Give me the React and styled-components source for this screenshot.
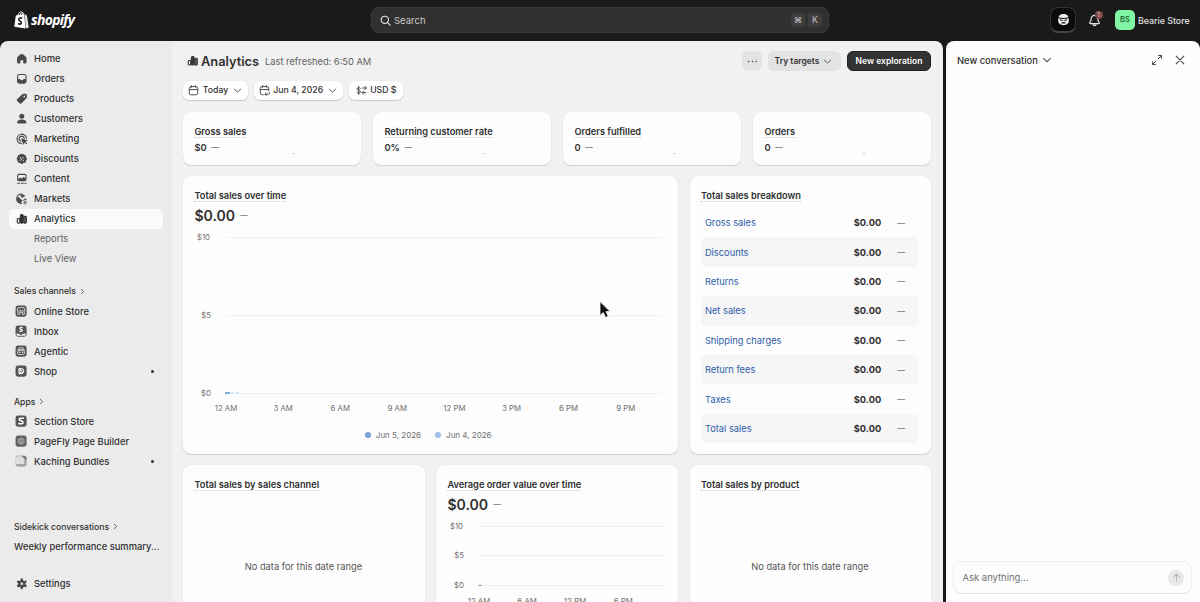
import React from 'react';
import styled, { createGlobalStyle } from 'styled-components';

const NAV = [
  { label: 'Home', icon: 'home' },
  { label: 'Orders', icon: 'orders' },
  { label: 'Products', icon: 'products' },
  { label: 'Customers', icon: 'customers' },
  { label: 'Marketing', icon: 'marketing' },
  { label: 'Discounts', icon: 'discounts' },
  { label: 'Content', icon: 'content' },
  { label: 'Markets', icon: 'markets' },
  { label: 'Analytics', icon: 'analytics', active: true },
  { label: 'Reports', sub: true },
  { label: 'Live View', sub: true },
];

const CHANNELS = [
  { label: 'Online Store', icon: 'store' },
  { label: 'Inbox', icon: 'inbox' },
  { label: 'Agentic', icon: 'agentic' },
  { label: 'Shop', icon: 'shop', dot: true },
];

const APPS = [
  { label: 'Section Store', icon: 'section' },
  { label: 'PageFly Page Builder', icon: 'pagefly' },
  { label: 'Kaching Bundles', icon: 'kaching', dot: true },
];

const METRICS = [
  { label: 'Gross sales', value: '$0' },
  { label: 'Returning customer rate', value: '0%' },
  { label: 'Orders fulfilled', value: '0' },
  { label: 'Orders', value: '0' },
];

const BREAKDOWN = [
  'Gross sales',
  'Discounts',
  'Returns',
  'Net sales',
  'Shipping charges',
  'Return fees',
  'Taxes',
  'Total sales',
];

const fill = '#4a4a4a';
const tile = <rect x="2.2" y="2.2" width="15.6" height="15.6" rx="3.4" fill="#555" />;

const ICONS = {
  home: (
    <path
      fill={fill}
      d="M8.3 3.2a2.6 2.6 0 0 1 3.4 0l4 3.6c.8.7 1.3 1.8 1.3 2.9v5.1c0 1.2-.9 2.2-2.1 2.2h-1.6c-.7 0-1.2-.5-1.2-1.2v-2.3c0-.8-.6-1.4-1.4-1.4h-1.4c-.8 0-1.4.6-1.4 1.4v2.3c0 .7-.5 1.2-1.2 1.2H5.1c-1.2 0-2.1-1-2.1-2.2V9.7c0-1.1.5-2.2 1.3-2.9z"
    />
  ),
  orders: (
    <>
      <rect x="3" y="2.8" width="14" height="14.4" rx="3.6" fill={fill} />
      <path fill="#ebebeb" d="M4.6 6.2c0-1.1.8-1.9 1.9-1.9h7c1.1 0 1.9.8 1.9 1.9v4h-2.2c-.6 0-1 .3-1.3.8-.4.7-.8 1-1.4 1h-1c-.6 0-1-.3-1.4-1-.3-.5-.7-.8-1.3-.8H4.6z" />
    </>
  ),
  products: (
    <path
      fill={fill}
      fillRule="evenodd"
      d="M10.7 3.4c.6-.6 1.3-.9 2.1-.9h2.4c1.3 0 2.3 1 2.3 2.3v2.6c0 .8-.3 1.5-.9 2.1l-6.9 7.1c-.9.9-2.3.9-3.2 0l-3.1-3.2c-.9-.9-.9-2.3 0-3.2zM13.6 7.8a1.3 1.3 0 1 0 0-2.6 1.3 1.3 0 0 0 0 2.6z"
    />
  ),
  customers: (
    <>
      <circle cx="10" cy="6.3" r="3.7" fill={fill} />
      <path fill={fill} d="M3.2 15.2c0-2.4 3-4.2 6.800-4.2s6.800 1.800 6.800 4.200c0 1-.7 1.800-1.700 1.800H4.900c-1 0-1.700-.8-1.700-1.800z" />
    </>
  ),
  marketing: (
    <g fill="none" stroke={fill} strokeWidth="1.7" strokeLinecap="round">
      <path d="M16.8 9.200A6.900 6.900 0 1 0 9.300 17" />
      <path d="M13.6 9A3.800 3.800 0 1 0 9 13.600" />
      <path d="M10.2 10.200l6.800 2.500-2.900 1.400-1.400 2.900z" fill={fill} />
      <path d="M14.5 14.500l2.500 2.500" />
    </g>
  ),
  discounts: (
    <>
      <g fill={fill}>
        <rect x="4" y="4" width="12" height="12" rx="2.5" />
        <rect x="4" y="4" width="12" height="12" rx="2.5" transform="rotate(45 10 10)" />
        <circle cx="10" cy="10" r="6.800" />
      </g>
      <path d="M7.800 12.400l4.400-4.400" stroke="#ebebeb" strokeWidth="1.3" strokeLinecap="round" />
      <circle cx="7.900" cy="8.300" r=".9" fill="#ebebeb" />
      <circle cx="12.200" cy="12.200" r=".9" fill="#ebebeb" />
    </>
  ),
  content: (
    <>
      <rect x="3" y="2.7" width="14" height="10.8" rx="2.8" fill={fill} />
      <path fill="#ebebeb" d="M4.6 5.8c0-.9.6-1.5 1.5-1.5h7.8c.9 0 1.5.6 1.5 1.5v3.4l-2-1.4c-.5-.3-1-.3-1.5 0l-2.3 1.8-1.3-.8c-.4-.3-.9-.2-1.3.1L4.6 10.4z" />
      <path d="M4 16.500h2.600M9.200 16.500h3M14.600 16.500h1.600" stroke={fill} strokeWidth="1.7" strokeLinecap="round" />
    </>
  ),
  markets: (
    <>
      <path d="M10.300 3.200a6.900 6.900 0 1 0-.5 13.700" fill="none" stroke={fill} strokeWidth="1.6" strokeLinecap="round" />
      <path fill={fill} d="M4 7l3 1.400 1.400 2.400 2.400.8-.4 2.300-1.400 1-.4 2.200C5 16.500 3 13.500 3 10.600zM9 3.300c2.500-.5 5.500 1 6.600 3.200l-2.300-.3-1.500 2.100-1.800-.3-1.800-2z" />
      <path d="M16.300 11h-2.300a1.300 1.300 0 0 0 0 2.600h1.300a1.300 1.300 0 0 1 0 2.600h-2.500M14.700 9.900v1M14.700 16.400v1.200" fill="none" stroke={fill} strokeWidth="1.4" strokeLinecap="round" />
    </>
  ),
  analytics: (
    <g fill="none" stroke="#303030" strokeWidth="1.6">
      <rect x="3.3" y="9.6" width="3.7" height="6.8" rx="1.4" />
      <rect x="8" y="3.8" width="4" height="12.6" rx="1.6" fill="#3a3a3a" />
      <rect x="13" y="6.2" width="3.7" height="10.2" rx="1.4" fill="#666" />
    </g>
  ),
  store: (
    <>
      {tile}
      <g fill="none" stroke="#ddd" strokeWidth="1.2">
        <path d="M5.700 5.200h8.600l1.200 3.300a1.700 1.700 0 0 1-3.600 0 1.900 1.900 0 0 1-3.800 0 1.700 1.700 0 0 1-3.600 0z" />
        <path d="M5.500 10.500v4.200h2.400V12h4.200v2.700h2.400v-4.200" />
      </g>
    </>
  ),
  inbox: (
    <>
      {tile}
      <path d="M3.700 13.500c1.700-.5 3.200-.3 4.200.8 1.300 1.300 3 1.300 4.200 0 1-1.100 2.500-1.300 4.200-.8v2.300c0 .5-.4.900-.9.900H4.700c-.6 0-1-.4-1-.9z" fill="#f2f2f2" />
      <path d="M11.700 5.300c-1.300-.8-3.300-.5-3.300.9 0 1.700 3.300 1.200 3.300 3 0 1.400-2 1.700-3.600.8" fill="none" stroke="#f2f2f2" strokeWidth="1.8" strokeLinecap="round" />
    </>
  ),
  agentic: (
    <>
      {tile}
      <g fill="none" stroke="#d8d8d8" strokeWidth="1.3">
        <path d="M4.900 8.300h10.200M6.500 7.900l.8-2.500h5.400l.8 2.500" />
        <rect x="5.300" y="8.700" width="9.400" height="6" rx="1.8" />
      </g>
      <path d="M8 10.700v2M12 10.700v2" stroke="#eee" strokeWidth="1.6" />
    </>
  ),
  shop: (
    <>
      {tile}
      <path d="M6.300 5.500h3.600a4.400 4.400 0 0 1 0 8.800H6.300z" fill="#f5f5f5" />
      <path d="M8.500 9.700a1.900 1.900 0 1 0 1.800-2.200" fill="none" stroke="#555" strokeWidth="1.4" strokeLinecap="round" />
    </>
  ),
  section: (
    <>
      {tile}
      <path d="M13 7V5.900H9.200c-1.200 0-1.900.7-1.900 1.700 0 2.400 5.500 1.600 5.500 4.300 0 1.200-.8 1.900-2 1.900H7v-1.300" fill="none" stroke="#fff" strokeWidth="2.1" />
    </>
  ),
  pagefly: (
    <>
      <rect x="2.2" y="2.2" width="15.6" height="15.6" rx="3.4" fill="#626262" />
      <path d="M10 4.400l4.900 2.900v5.400L10 15.600l-4.900-2.900V7.300z" fill="#999" />
      <path d="M5.300 9.200h9.400M6.300 11.700h7.600M10 4.700v4.500" stroke="#7d7d7d" strokeWidth=".8" />
    </>
  ),
  kaching: (
    <>
      <rect x="2.2" y="2.2" width="15.6" height="15.6" rx="3.4" fill="#a5a5a5" />
      <path d="M2.600 6.200c0-2 1.200-3.200 3.200-3.200h4.700l3.900 4.500v5.700c0 .6-.4 1-1 1H3.600c-.6 0-1-.4-1-1z" fill="#dedede" />
      <path d="M11.200 2.900h3.300c1.800 0 3 1.200 3 3v3.600l-3-3.400z" fill="#777" />
    </>
  ),
  settings: (
    <>
      <path
        d="M10 3.800v12.400M4.600 6.900l10.800 6.200M4.600 13.100l10.800-6.200"
        stroke={fill}
        strokeWidth="3.6"
        strokeLinecap="round"
      />
      <circle cx="10" cy="10" r="5.300" fill={fill} />
      <circle cx="10" cy="10" r="1.900" fill="#ebebeb" />
    </>
  ),
  calendar: (
    <g fill="none" stroke="#4a4a4a" strokeWidth="1.5" strokeLinecap="round">
      <rect x="3.5" y="4" width="13" height="12.7" rx="3" />
      <path d="M3.5 8.600h13M7 2.500V5M13 2.500V5" />
    </g>
  ),
  compare: (
    <g fill="none" stroke="#4a4a4a" strokeWidth="1.5" strokeLinecap="round" strokeLinejoin="round">
      <path d="M8 16.600H6.500a3 3 0 0 1-3-3V7a3 3 0 0 1 3-3h7a3 3 0 0 1 3 3v3.500M3.500 8.500h13M7 2.500V5M13 2.500V5" />
      <path d="M17.800 13.300v.7c0 1-.8 1.800-1.800 1.800h-5M12.800 13.700l-2.100 2.100 2.100 2.100" />
    </g>
  ),
  currency: (
    <g fill="none" stroke="#4a4a4a" strokeWidth="1.5" strokeLinecap="round" strokeLinejoin="round">
      <path d="M8.300 6.500C7.500 5.400 3 5.200 3 7.700c0 2.400 5.500 1.700 5.500 4.300 0 2.700-4.700 2.500-5.700 1M5.700 3.800v12" />
      <path d="M11.500 6.200h5.700M15.200 3.700l2.300 2.500-2.300 2.500M17 13.200h-5.700M13.300 10.800l-2.300 2.400 2.300 2.500" />
    </g>
  ),
  chevronDown: (
    <path d="M5 7.800l5 4.700 5-4.700" fill="none" stroke="#555" strokeWidth="1.5" strokeLinecap="round" strokeLinejoin="round" />
  ),
  chevronRight: (
    <path d="M7.500 5l5 5-5 5" fill="none" stroke="#555" strokeWidth="2" strokeLinecap="round" strokeLinejoin="round" />
  ),
  search: (
    <g fill="none" stroke="#e3e3e3" strokeWidth="1.8" strokeLinecap="round">
      <circle cx="9" cy="9" r="5.600" />
      <path d="M13.200 13.200l3.800 3.800" />
    </g>
  ),
  bell: (
    <g fill="none" stroke="#e3e3e3" strokeWidth="1.6" strokeLinecap="round" strokeLinejoin="round">
      <path d="M10 3.200a4.400 4.400 0 0 0-4.400 4.400c0 2.800-.6 3.600-1.700 4.900-.6.700-.2 1.700.7 1.700h10.800c.9 0 1.300-1 .7-1.700-1.100-1.300-1.700-2.100-1.700-4.900A4.400 4.400 0 0 0 10 3.200z" />
      <path d="M8 14.500a2 2.200 0 0 0 4 0" />
    </g>
  ),
  sidekick: (
    <>
      <path d="M3 9c0-4 2.800-6.500 7-6.500S17 5 17 9v3c0 3.500-2.700 5.500-7 5.500S3 15.500 3 12z" fill="#eee" />
      <path d="M2.500 7.300c4.500 1.500 10.500 1.500 15 0M5.800 10.300l2.700 1.200M14.200 10.300l-2.700 1.200M8 14.500h4" stroke="#111" strokeWidth="1.4" strokeLinecap="round" fill="none" />
    </>
  ),
  expand: (
    <g fill="none" stroke="#444" strokeWidth="1.4" strokeLinecap="round" strokeLinejoin="round">
      <path d="M12.200 3.500h4.300v4.300M16.200 3.800l-4.700 4.700M7.800 16.500H3.500v-4.300M3.800 16.200l4.700-4.700" />
    </g>
  ),
  close: (
    <path d="M4.500 4.500l11 11M15.500 4.500l-11 11" fill="none" stroke="#444" strokeWidth="1.5" strokeLinecap="round" />
  ),
  dots: (
    <g fill="#444">
      <circle cx="3" cy="10" r="1.500" />
      <circle cx="10" cy="10" r="1.500" />
      <circle cx="17" cy="10" r="1.500" />
    </g>
  ),
  arrowUp: (
    <path d="M10 16V4.500M5 9l5-5 5 5" fill="none" stroke="#b5b5b5" strokeWidth="2" strokeLinecap="round" strokeLinejoin="round" />
  ),
};

function Icon({ name, size = 15 }) {
  return (
    <IconSvg viewBox="0 0 20 20" width={size} height={size}>
      {ICONS[name]}
    </IconSvg>
  );
}

function NavRow({ item, iconSize = 13.6 }) {
  return (
    <NavItem $active={item.active}>
      <NavIcon>{item.icon && <Icon name={item.icon} size={iconSize} />}</NavIcon>
      <NavLabel $sub={item.sub}>{item.label}</NavLabel>
      {item.dot && <NavDot />}
    </NavItem>
  );
}

function Chart({ width, height, rows, lineFrom, lineTo, ticks, tickY, children }) {
  return (
    <ChartSvg width={width} height={height}>
      {rows.map((row) => (
        <g key={row.label}>
          <text x={row.x} y={row.y + 2.5} textAnchor="end">{row.label}</text>
          <line x1={lineFrom} x2={lineTo} y1={row.y + 0.5} y2={row.y + 0.5} stroke="#f1f1f1" />
        </g>
      ))}
      {ticks.map((tick) => (
        <text key={tick.label} x={tick.x} y={tickY} textAnchor="middle">{tick.label}</text>
      ))}
      {children}
    </ChartSvg>
  );
}

function TopBar() {
  return (
    <Header>
      <Logo>
        <svg width="15" height="18" viewBox="0 0 15 18">
          <path d="M1.800 4.600l8.600-1.500.9 14.400L.3 15.800z" fill="#fff" />
          <path d="M10.900 3.200l2 1.300 1.900 11.900-3.200 1z" fill="#e4e4e4" />
          <path d="M4 4.600C4.300 2.500 5.700.8 7 .8s2 1 2.100 2.800M6.300 4.200C6.600 2.400 7.600 1.600 8.600 1.800c.9.200 1.200.8 1.300 1.600" fill="none" stroke="#fff" strokeWidth=".9" />
          <path d="M8.300 7.200c-1.500-.8-3.400-.4-3.400 1.200 0 1.800 2.700 1.700 2.500 3.500-.2 1.500-2.100 1.600-3.400.5" fill="none" stroke="#1a1a1a" strokeWidth="1.600" />
        </svg>
        <Wordmark>shopify</Wordmark>
      </Logo>
      <SearchBox>
        <Icon name="search" size={13} />
        <SearchText>Search</SearchText>
        <Key>⌘</Key>
        <Key>K</Key>
      </SearchBox>
      <HeaderActions>
        <SidekickButton>
          <Icon name="sidekick" size={15} />
        </SidekickButton>
        <BellButton>
          <Icon name="bell" size={15} />
          <BellBadge>1</BellBadge>
        </BellButton>
        <Avatar>BS</Avatar>
        <StoreName>Bearie Store</StoreName>
      </HeaderActions>
    </Header>
  );
}

function Sidebar() {
  return (
    <Nav>
      {NAV.map((item) => <NavRow key={item.label} item={item} />)}
      <SectionLabel $top={12.5}>
        Sales channels <Icon name="chevronRight" size={9} />
      </SectionLabel>
      {CHANNELS.map((item) => <NavRow key={item.label} item={item} iconSize={14.2} />)}
      <SectionLabel $top={10.5}>
        Apps <Icon name="chevronRight" size={9} />
      </SectionLabel>
      {APPS.map((item) => <NavRow key={item.label} item={item} iconSize={14.2} />)}
      <NavFooter>
        <SectionLabel $top={0}>
          Sidekick conversations <Icon name="chevronRight" size={9} />
        </SectionLabel>
        <Conversation>Weekly performance summary...</Conversation>
        <NavRow item={{ label: 'Settings', icon: 'settings' }} />
      </NavFooter>
    </Nav>
  );
}

function Analytics() {
  return (
    <Main>
      <TitleRow>
        <Icon name="analytics" size={13.5} />
        <Title>Analytics</Title>
        <Refreshed>Last refreshed: 6:50 AM</Refreshed>
        <MoreButton>
          <Icon name="dots" size={11} />
        </MoreButton>
        <TargetsButton>
          Try targets <Icon name="chevronDown" size={13} />
        </TargetsButton>
        <PrimaryButton>New exploration</PrimaryButton>
      </TitleRow>
      <Filters>
        <Filter $width={65}>
          <Icon name="calendar" size={13} /> Today <Icon name="chevronDown" size={13} />
        </Filter>
        <Filter $width={88.5}>
          <Icon name="compare" size={13} /> Jun 4, 2026 <Icon name="chevronDown" size={13} />
        </Filter>
        <Filter $width={54}>
          <Icon name="currency" size={13} /> USD $
        </Filter>
      </Filters>
      <Metrics>
        {METRICS.map((metric) => (
          <MetricCard key={metric.label}>
            <CardTitle>{metric.label}</CardTitle>
            <MetricValue>
              {metric.value} <Dash>—</Dash>
              <Spark />
            </MetricValue>
          </MetricCard>
        ))}
      </Metrics>
      <Reports>
        <WideCard>
          <CardTitle>Total sales over time</CardTitle>
          <BigValue>$0.00 <Dash>—</Dash></BigValue>
          <Chart
            width={473}
            height={186}
            lineFrom={33}
            lineTo={469}
            rows={[
              { label: '$10', x: 16, y: 9 },
              { label: '$5', x: 17, y: 87 },
              { label: '$0', x: 17, y: 165 },
            ]}
            tickY={183}
            ticks={['12 AM', '3 AM', '6 AM', '9 AM', '12 PM', '3 PM', '6 PM', '9 PM'].map((label, i) => ({
              label,
              x: 32 + i * 57.1,
            }))}
          >
            <path d="M31 165h5" stroke="#5f9fd0" strokeWidth="1.6" />
            <path d="M37.500 165h2M42.500 165h2" stroke="#8fc0e4" strokeWidth="1.2" />
          </Chart>
          <Legend>
            <LegendItem $color="#7b9fd8">Jun 5, 2026</LegendItem>
            <LegendItem $color="#a3bfe8">Jun 4, 2026</LegendItem>
          </Legend>
        </WideCard>
        <Card>
          <CardTitle>Total sales breakdown</CardTitle>
          <BreakdownList>
            {BREAKDOWN.map((label, i) => (
              <BreakdownRow key={label} $shaded={i % 2 === 1}>
                <BreakdownLink>{label}</BreakdownLink>
                <Amount>$0.00</Amount>
                <Dash>—</Dash>
              </BreakdownRow>
            ))}
          </BreakdownList>
        </Card>
        <Card>
          <CardTitle>Total sales by sales channel</CardTitle>
          <Empty>No data for this date range</Empty>
        </Card>
        <Card>
          <CardTitle>Average order value over time</CardTitle>
          <BigValue>$0.00 <Dash>—</Dash></BigValue>
          <Chart
            width={219}
            height={120}
            lineFrom={31}
            lineTo={217}
            rows={[
              { label: '$10', x: 16, y: 9 },
              { label: '$5', x: 17, y: 38 },
              { label: '$0', x: 17, y: 68 },
            ]}
            tickY={87}
            ticks={['12 AM', '6 AM', '12 PM', '6 PM'].map((label, i) => ({ label, x: 32 + i * 48.1 }))}
          >
            <path d="M31.500 68.500h3" stroke="#7ba9cf" strokeWidth="1.3" />
          </Chart>
        </Card>
        <Card>
          <CardTitle>Total sales by product</CardTitle>
          <Empty>No data for this date range</Empty>
        </Card>
      </Reports>
    </Main>
  );
}

function Sidekick() {
  return (
    <Panel>
      <PanelHeader>
        <PanelTitle>
          New conversation <Icon name="chevronDown" size={14} />
        </PanelTitle>
        <Icon name="expand" size={14} />
        <Icon name="close" size={14} />
      </PanelHeader>
      <Composer>
        Ask anything...
        <SendButton>
          <Icon name="arrowUp" size={11} />
        </SendButton>
      </Composer>
    </Panel>
  );
}

export default function App() {
  return (
    <Page>
      <GlobalStyle />
      <TopBar />
      <Body>
        <Sidebar />
        <Analytics />
        <Sidekick />
      </Body>
      <Cursor width="14" height="20" viewBox="0 0 14 20">
        <path d="M2 1.500v14l3.300-2.900 2.300 4.900 2.600-1.200-2.200-4.700h4.200z" fill="#111" stroke="#fff" strokeWidth=".8" />
      </Cursor>
    </Page>
  );
}

const GlobalStyle = createGlobalStyle`
  * {
    box-sizing: border-box;
  }
  body {
    margin: 0;
    background: #1a1a1a;
    font-family: Inter, 'Liberation Sans', sans-serif;
    font-size: 9.3px;
    color: #303030;
  }
`;

const IconSvg = styled.svg`
  display: block;
  flex: none;
`;

const Page = styled.div`
  display: flex;
  flex-direction: column;
  width: 1200px;
  height: 602px;
  overflow: hidden;
`;

const Header = styled.div`
  display: flex;
  flex: none;
  align-items: center;
  height: 41px;
  padding-bottom: 1px;
  background: #1a1a1a;
`;

const Logo = styled.div`
  display: flex;
  align-items: center;
  gap: 2px;
  width: 371px;
  padding-left: 14px;
`;

const Wordmark = styled.span`
  font-family: 'Open Sans', sans-serif;
  font-size: 14px;
  font-style: italic;
  font-weight: 700;
  letter-spacing: -0.7px;
  line-height: 18px;
  color: #fff;
`;

const SearchBox = styled.div`
  display: flex;
  align-items: center;
  width: 458px;
  height: 26px;
  padding: 0 6px 0 7px;
  border: 1px solid #3b3b3b;
  border-radius: 8px;
  background: #303030;
`;

const SearchText = styled.span`
  flex: 1;
  margin-left: 2px;
  font-size: 9.5px;
  color: #c9c9c9;
`;

const Key = styled.span`
  width: 14px;
  height: 14px;
  margin-left: 3px;
  border-radius: 4px;
  background: #3d3d3d;
  font-size: 8.5px;
  font-weight: 500;
  line-height: 14px;
  text-align: center;
  color: #b5b5b5;
`;

const HeaderActions = styled.div`
  display: flex;
  align-items: center;
  margin-left: 221px;
`;

const SidekickButton = styled.div`
  display: flex;
  align-items: center;
  justify-content: center;
  width: 26px;
  height: 26px;
  border: 1px solid #333;
  border-bottom: 2px solid #444;
  border-radius: 8px;
  background: #0c0c0c;
`;

const BellButton = styled.div`
  position: relative;
  margin-left: 10.5px;
`;

const BellBadge = styled.span`
  position: absolute;
  top: -2px;
  right: -1px;
  width: 8px;
  height: 8px;
  border-radius: 50%;
  background: #7d4a4a;
  font-size: 6px;
  line-height: 8px;
  text-align: center;
  color: #e5c9c9;
`;

const Avatar = styled.div`
  width: 20px;
  height: 20px;
  margin-left: 13.5px;
  border-radius: 5px;
  background: #80f5a2;
  font-size: 7.5px;
  font-weight: 500;
  line-height: 20px;
  text-align: center;
  color: #14552b;
`;

const StoreName = styled.span`
  margin-left: 3px;
  font-size: 8.8px;
  font-weight: 500;
  white-space: nowrap;
  color: #e3e3e3;
`;

const Body = styled.div`
  display: flex;
  flex: 1;
  min-height: 0;
`;

const Nav = styled.div`
  display: flex;
  flex: none;
  flex-direction: column;
  width: 172px;
  padding: 7.5px 9px 8.5px 9px;
  border-top-left-radius: 8px;
  background: #ebebeb;
`;

const NavItem = styled.div`
  display: flex;
  flex: none;
  align-items: center;
  height: 20px;
  padding: 0 9px 0 5px;
  border-radius: 5px;
  background: ${({ $active }) => $active ? '#fafafa' : 'transparent'};
`;

const NavIcon = styled.span`
  display: flex;
  justify-content: center;
  width: 15px;
  margin-right: 5px;
`;

const NavLabel = styled.span`
  flex: 1;
  font-size: 9.4px;
  font-weight: ${({ $sub }) => $sub ? 400 : 500};
  color: ${({ $sub }) => $sub ? '#616161' : '#303030'};
`;

const NavDot = styled.span`
  width: 3px;
  height: 3px;
  border-radius: 50%;
  background: #303030;
`;

const SectionLabel = styled.div`
  display: flex;
  flex: none;
  align-items: center;
  gap: 2px;
  height: 20px;
  margin-top: ${({ $top }) => $top}px;
  padding-left: 5px;
  font-size: 8.6px;
  font-weight: 500;
`;

const NavFooter = styled.div`
  margin-top: auto;
`;

const Conversation = styled.div`
  height: 20px;
  margin-bottom: 17px;
  padding-left: 5px;
  font-size: 9.35px;
  font-weight: 500;
  line-height: 20px;
  white-space: nowrap;
`;

const Main = styled.div`
  display: flex;
  flex: none;
  flex-direction: column;
  width: 771px;
  padding: 10px 12px 0 11px;
  border-top-right-radius: 8px;
  background: #f1f1f1;
`;

const TitleRow = styled.div`
  display: flex;
  flex: none;
  align-items: center;
  height: 20px;
  padding-left: 3px;
`;

const Title = styled.h1`
  margin: 0 0 0 1.5px;
  font-size: 12.8px;
  font-weight: 600;
`;

const Refreshed = styled.span`
  flex: 1;
  margin-left: 6px;
  color: #616161;
`;

const Button = styled.div`
  display: flex;
  align-items: center;
  justify-content: center;
  height: 20px;
  margin-left: 6px;
  border-radius: 6px;
  background: #e3e3e3;
  font-size: 8.5px;
  font-weight: 600;
  white-space: nowrap;
`;

const MoreButton = styled(Button)`
  width: 20px;
`;

const TargetsButton = styled(Button)`
  gap: 2px;
  width: 73px;
`;

const PrimaryButton = styled(Button)`
  width: 84px;
  border: 1px solid #1f1f1f;
  background: #333;
  color: #fff;
`;

const Filters = styled.div`
  display: flex;
  flex: none;
  gap: 6px;
  margin-top: 9.5px;
`;

const Filter = styled.div`
  display: flex;
  align-items: center;
  justify-content: center;
  gap: 2.5px;
  width: ${({ $width }) => $width}px;
  height: 19px;
  border-radius: 6px;
  background: #fff;
  box-shadow: 0 1px 1px rgba(0, 0, 0, 0.16), 0 0 1px rgba(0, 0, 0, 0.12);
  font-size: 8.7px;
  font-weight: 500;
  white-space: nowrap;
`;

const Metrics = styled.div`
  display: grid;
  flex: none;
  grid-template-columns: repeat(4, 1fr);
  gap: 12px;
  margin-top: 12px;
`;

const Card = styled.div`
  padding: 13px 12px 12px 11.4px;
  border-radius: 8px;
  background: #fdfdfd;
  box-shadow: 0 1px 1px rgba(0, 0, 0, 0.13), 0 0 1px rgba(0, 0, 0, 0.12);
`;

const MetricCard = styled(Card)`
  height: 53px;
`;

const CardTitle = styled.div`
  width: fit-content;
  height: 13px;
  border-bottom: 1px dotted #ccc;
  font-size: 9.25px;
  font-weight: 600;
  line-height: 13px;
  white-space: nowrap;
`;

const MetricValue = styled.div`
  display: flex;
  align-items: center;
  gap: 4.5px;
  height: 19px;
  font-weight: 600;
`;

const Dash = styled.span`
  font-size: 7.8px;
  font-weight: 400;
  color: #616161;
`;

const Spark = styled.span`
  width: 2px;
  height: 1px;
  margin: 12px 54px 0 auto;
  background: #c9c9c9;
`;

const Reports = styled.div`
  display: grid;
  flex: none;
  grid-template-columns: repeat(3, 1fr);
  grid-template-rows: 278px 200px;
  gap: 11px 11.5px;
  margin-top: 11.5px;
`;

const WideCard = styled(Card)`
  grid-column: span 2;
`;

const BigValue = styled.div`
  display: flex;
  align-items: center;
  gap: 5px;
  height: 26px;
  font-size: 14.1px;
  font-weight: 600;
`;

const ChartSvg = styled.svg`
  display: block;
  margin-left: -0.4px;
  overflow: visible;

  text {
    font-size: 7.8px;
    fill: #707070;
  }
`;

const Legend = styled.div`
  display: flex;
  justify-content: center;
  gap: 14px;
  margin: 15px 4px 0 0;
`;

const LegendItem = styled.div`
  display: flex;
  align-items: center;
  gap: 5px;
  font-size: 8px;
  line-height: 12px;
  color: #707070;

  &::before {
    content: '';
    width: 6px;
    height: 6px;
    border-radius: 50%;
    background: ${({ $color }) => $color};
  }
`;

const BreakdownList = styled.div`
  margin-top: 6px;
`;

const BreakdownRow = styled.div`
  display: flex;
  align-items: center;
  height: 29.4px;
  padding: 0 14px 0 4px;
  border-radius: 5px;
  background: ${({ $shaded }) => $shaded ? '#f6f6f6' : 'transparent'};
`;

const BreakdownLink = styled.span`
  flex: 1;
  color: #2f5da8;
`;

const Amount = styled.span`
  margin-right: 16px;
  font-size: 9.3px;
  font-weight: 700;
`;

const Empty = styled.div`
  margin-top: 70px;
  line-height: 12px;
  text-align: center;
  color: #555;
`;

const Panel = styled.div`
  display: flex;
  flex: 1;
  flex-direction: column;
  justify-content: space-between;
  margin-left: 3px;
  padding: 0 8px 8px 7px;
  border-radius: 8px 8px 0 0;
  background: #fdfdfd;
`;

const PanelHeader = styled.div`
  display: flex;
  align-items: center;
  gap: 9px;
  height: 38px;
  padding: 0 5px 0 4px;
`;

const PanelTitle = styled.div`
  display: flex;
  flex: 1;
  align-items: center;
  gap: 2.5px;
  font-size: 9.4px;
  font-weight: 500;
`;

const Composer = styled.div`
  display: flex;
  align-items: center;
  justify-content: space-between;
  height: 33px;
  padding: 0 7px 0 8.5px;
  border: 1px solid #efefef;
  border-bottom-color: #e0e0e0;
  border-radius: 9px;
  font-size: 9.45px;
  color: #707070;
`;

const SendButton = styled.div`
  display: flex;
  align-items: center;
  justify-content: center;
  width: 16px;
  height: 16px;
  border-radius: 50%;
  background: #e8e8e8;
`;

const Cursor = styled.svg`
  position: absolute;
  top: 300px;
  left: 598px;
`;
